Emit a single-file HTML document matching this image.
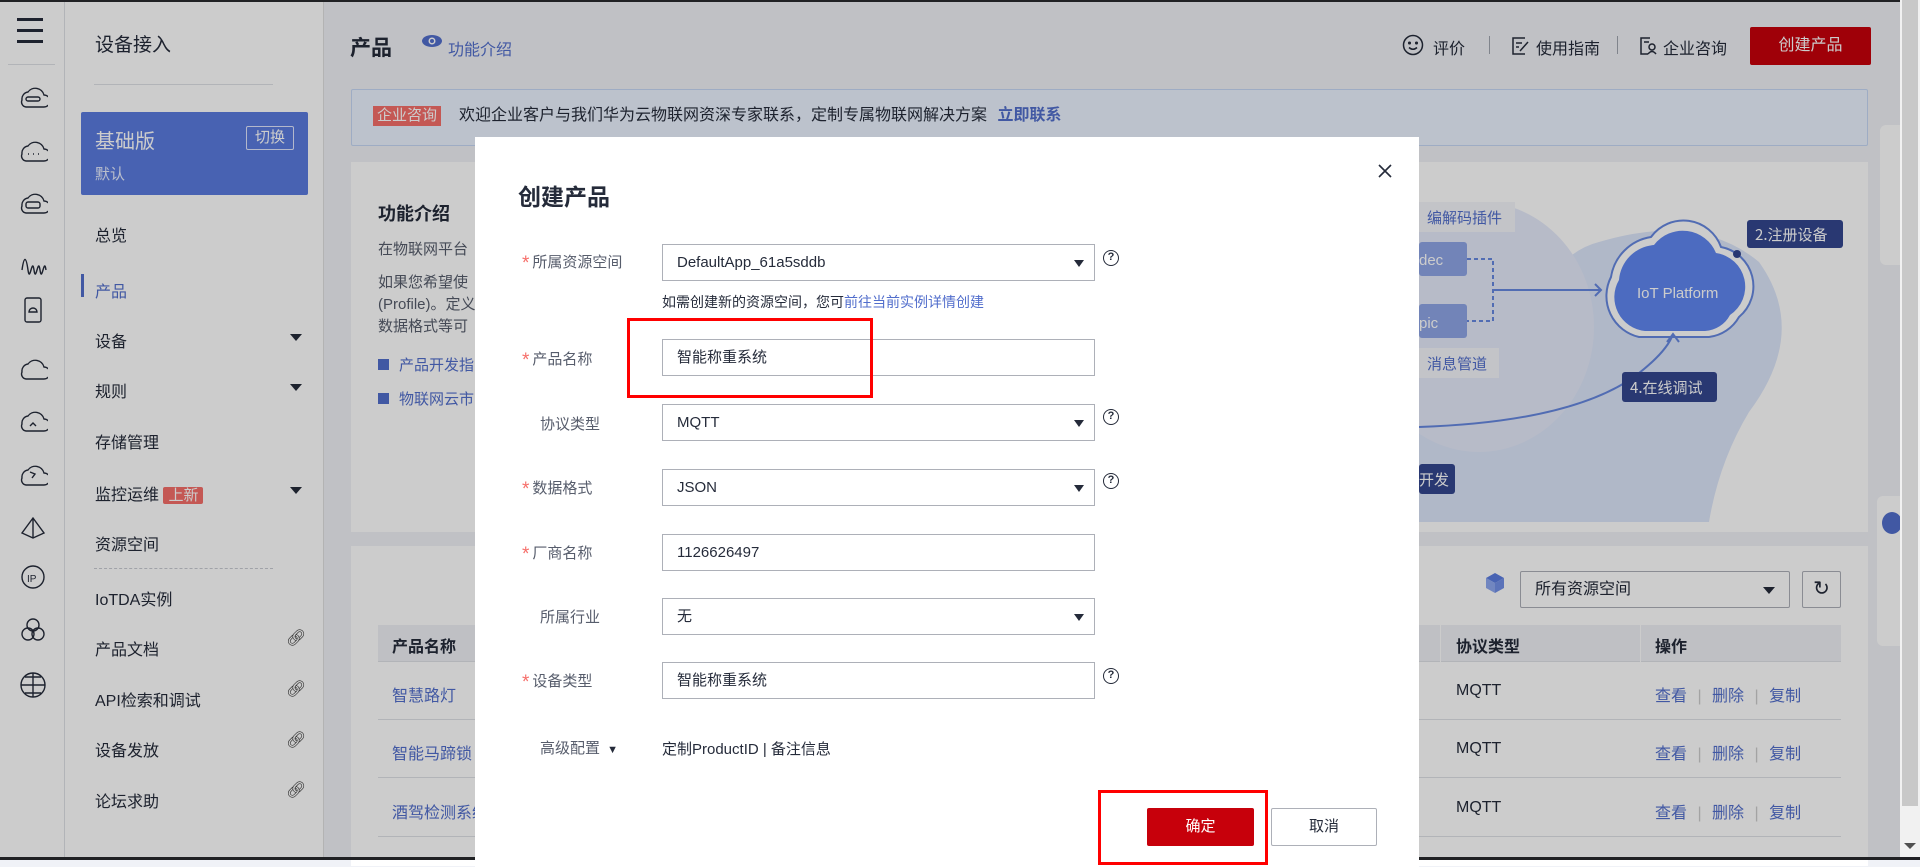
<!DOCTYPE html>
<html><head><meta charset="utf-8">
<style>
*{margin:0;padding:0;box-sizing:border-box}
body{width:1920px;height:860px;overflow:hidden;position:relative;background:#f0f2f7;font-family:"Liberation Sans","Noto Sans CJK SC",sans-serif;color:#252b3a}
.a{position:absolute}
.t{position:absolute;white-space:nowrap}
.rail{left:0;top:0;width:65px;height:860px;background:#fff;border-right:1px solid #dfe1e6}
.side{left:65px;top:0;width:259px;height:860px;background:#fff;border-right:1px solid #e0e0e0}
.mi{position:absolute;left:95px;font-size:16px;color:#252b3a}
.arrow{position:absolute;left:290px;width:0;height:0;border-left:6px solid transparent;border-right:6px solid transparent;border-top:7px solid #252b3a}
.link{position:absolute;left:286px;font-size:16px;color:#333}
.card{background:#fff}
.blue{color:#526ecc}
.ov{left:0;top:0;width:1900px;height:860px;background:rgba(0,0,0,0.2)}
.modal{left:475px;top:137px;width:944px;height:730px;background:#fff}
.lbl{position:absolute;font-size:15px;color:#575d6c}
.star{color:#f66f6a;font-size:19px;margin-right:3px;vertical-align:-2px}
.inp{position:absolute;left:662px;width:433px;height:37px;border:1px solid #adb0b8;font-size:15px;color:#252b3a;padding:0 14px;line-height:35px;background:#fff}
.inp .dd{position:absolute;right:10px;top:15px;border-left:5px solid transparent;border-right:5px solid transparent;border-top:7px solid #252b3a}
.q{position:absolute;left:1103px;width:16px;height:16px;border:1.5px solid #252b3a;border-radius:50%;font-size:11px;text-align:center;line-height:13px;font-weight:bold;color:#252b3a}
</style></head><body>
<div class="a rail">
 <div class="a" style="left:17px;top:18px;width:26px;height:3px;background:#252b3a"></div>
 <div class="a" style="left:17px;top:29px;width:26px;height:3px;background:#252b3a"></div>
 <div class="a" style="left:17px;top:40px;width:26px;height:3px;background:#252b3a"></div>
 <div class="a" style="left:8px;top:64px;width:47px;height:1px;background:#dfe1e6"></div>
 <svg class="a" style="left:18px;top:80px" width="30" height="620" viewBox="0 0 30 620" fill="none" stroke="#252b3a" stroke-width="1.4">
  <path d="M4 20a7 7 0 0 1 6-8a9 9 0 0 1 16 3a6 6 0 0 1 0 12H8a5 5 0 0 1-4-7z"/><rect x="8" y="17" width="14" height="4" rx="2"/>
  <path d="M4 74a7 7 0 0 1 6-8a9 9 0 0 1 16 3a6 6 0 0 1 0 12H8a5 5 0 0 1-4-7z"/><path d="M10 74h1M15 74h1M20 74h1"/>
  <path d="M4 126a7 7 0 0 1 6-8a9 9 0 0 1 16 3a6 6 0 0 1 0 12H8a5 5 0 0 1-4-7z"/><rect x="8" y="122" width="14" height="6" rx="2"/>
  <path d="M4 190c2-14 4-14 6 0s4-14 6 0 4-14 6 0 4-14 6 0"/>
  <rect x="7" y="218" width="16" height="24" rx="2"/><path d="M11 232a4 4 0 0 1 8 0z"/>
  <path d="M4 292a7 7 0 0 1 6-8a9 9 0 0 1 16 3a6 6 0 0 1 0 12H8a5 5 0 0 1-4-7z"/>
  <path d="M4 344a7 7 0 0 1 6-8a9 9 0 0 1 16 3a6 6 0 0 1 0 12H8a5 5 0 0 1-4-7z"/><path d="M12 346l3-3 3 3"/>
  <path d="M4 398a7 7 0 0 1 6-8a9 9 0 0 1 16 3a6 6 0 0 1 0 12H8a5 5 0 0 1-4-7z"/><path d="M12 392l5 2-3 4"/>
  <path d="M15 438l-11 15 11 5 11-5z M15 438v20"/>
  <circle cx="15" cy="497" r="11"/><text x="9" y="502" font-size="10" fill="#252b3a" stroke="none" font-family="Liberation Sans">IP</text>
  <circle cx="15" cy="545" r="6"/><circle cx="10" cy="554" r="6"/><circle cx="20" cy="554" r="6"/>
  <circle cx="15" cy="605" r="12"/><path d="M3 605h24M15 593v24M7 597h16M7 613h16"/>
 </svg>
</div>
<div class="a side"></div>
<div class="t" style="left:95px;top:30px;font-size:19px;color:#252b3a">设备接入</div>
<div class="a" style="left:94px;top:84px;width:179px;height:1px;background:#dfe1e6"></div>
<div class="a" style="left:81px;top:112px;width:227px;height:83px;background:#5a7bdf;border-radius:2px"></div>
<div class="t" style="left:95px;top:125px;font-size:20px;color:#fff">基础版</div>
<div class="t" style="left:95px;top:163px;font-size:15px;color:#e8eeff">默认</div>
<div class="t" style="left:246px;top:126px;width:48px;height:24px;border:1px solid #e0e7ff;color:#fff;font-size:15px;text-align:center;line-height:22px;border-radius:2px">切换</div>
<div class="mi" style="top:222px">总览</div>
<div class="a" style="left:81px;top:274px;width:3px;height:23px;background:#526ecc"></div>
<div class="mi" style="top:278px;color:#526ecc">产品</div>
<div class="mi" style="top:328px">设备</div><div class="arrow" style="top:334px"></div>
<div class="mi" style="top:378px">规则</div><div class="arrow" style="top:384px"></div>
<div class="mi" style="top:429px">存储管理</div>
<div class="mi" style="top:481px">监控运维 <span style="background:#f66f6a;color:#fff;font-size:15px;padding:0 5px;border-radius:2px">上新</span></div><div class="arrow" style="top:487px"></div>
<div class="mi" style="top:531px">资源空间</div>
<div class="a" style="left:94px;top:568px;width:179px;border-top:1px dashed #c8cbd2"></div>
<div class="mi" style="top:586px">IoTDA实例</div>
<div class="mi" style="top:636px">产品文档</div><div class="link" style="top:628px">🔗︎</div>
<div class="mi" style="top:687px">API检索和调试</div><div class="link" style="top:679px">🔗︎</div>
<div class="mi" style="top:737px">设备发放</div><div class="link" style="top:730px">🔗︎</div>
<div class="mi" style="top:788px">论坛求助</div><div class="link" style="top:780px">🔗︎</div>

<div class="t" style="left:350px;top:32px;font-size:21px;font-weight:bold">产品</div>
<svg class="a" style="left:421px;top:34px" width="22" height="14" viewBox="0 0 22 14"><ellipse cx="11" cy="7" rx="10" ry="6" fill="#526ecc"/><circle cx="11" cy="7" r="3.5" fill="#fff"/><circle cx="11" cy="7" r="2" fill="#526ecc"/></svg>
<div class="t blue" style="left:448px;top:36px;font-size:16px">功能介绍</div>
<svg class="a" style="left:1402px;top:34px" width="22" height="22" viewBox="0 0 22 22" fill="none" stroke="#252b3a" stroke-width="1.5"><circle cx="11" cy="11" r="9.5"/><circle cx="7.5" cy="9" r=".8" fill="#252b3a"/><circle cx="14.5" cy="9" r=".8" fill="#252b3a"/><path d="M7 13.5q4 3.5 8 0"/></svg>
<div class="t" style="left:1433px;top:35px;font-size:16px">评价</div>
<div class="a" style="left:1489px;top:36px;width:1px;height:18px;background:#a0a5b0"></div>
<svg class="a" style="left:1512px;top:37px" width="18" height="18" viewBox="0 0 18 18" fill="none" stroke="#252b3a" stroke-width="1.5"><path d="M13 1H1v16h12M4 6h6M4 10h3M8 14l8-9"/></svg>
<div class="t" style="left:1536px;top:35px;font-size:16px">使用指南</div>
<div class="a" style="left:1617px;top:36px;width:1px;height:18px;background:#a0a5b0"></div>
<svg class="a" style="left:1640px;top:37px" width="18" height="18" viewBox="0 0 18 18" fill="none" stroke="#252b3a" stroke-width="1.5"><path d="M10 1H1v16h7M4 5h5"/><circle cx="12" cy="10" r="3"/><path d="M8 17q4-5 8 0"/></svg>
<div class="t" style="left:1663px;top:35px;font-size:16px">企业咨询</div>
<div class="a" style="left:1750px;top:27px;width:121px;height:38px;background:#c7000b;border-radius:2px;color:#fff;font-size:16px;text-align:center;line-height:38px">创建产品</div>

<div class="a" style="left:351px;top:89px;width:1517px;height:57px;background:#ebf3ff;border:1px solid #c6d8f5;border-radius:2px"></div>
<div class="t" style="left:373px;top:106px;background:#f66f6a;color:#fff;font-size:15px;padding:0 4px;line-height:20px">企业咨询</div>
<div class="t" style="left:459px;top:106px;font-size:16px;line-height:20px">欢迎企业客户与我们华为云物联网资深专家联系，定制专属物联网解决方案 <b style="color:#526ecc;margin-left:6px">立即联系</b></div>

<div class="a card" style="left:351px;top:162px;width:1517px;height:370px"></div>
<div class="t" style="left:378px;top:200px;font-size:18px;font-weight:bold">功能介绍</div>
<div class="t" style="left:378px;top:238px;font-size:15px;color:#575d6c">在物联网平台</div>
<div class="t" style="left:378px;top:272px;font-size:15px;color:#575d6c;line-height:22px">如果您希望使<br>(Profile)。定义<br>数据格式等可</div>
<div class="a" style="left:378px;top:359px;width:11px;height:11px;background:#526ecc"></div>
<div class="t blue" style="left:399px;top:354px;font-size:15px">产品开发指</div>
<div class="a" style="left:378px;top:393px;width:11px;height:11px;background:#526ecc"></div>
<div class="t blue" style="left:399px;top:388px;font-size:15px">物联网云市</div>
<svg class="a" style="left:1419px;top:162px" width="449" height="370" viewBox="0 0 449 370">
 <path d="M180 80 Q280 50 340 100 Q390 170 330 250 Q300 300 290 360 L0 360 L0 230 Q90 200 120 140 Q140 90 180 80z" fill="#dde6fa"/>
 <ellipse cx="60" cy="165" rx="115" ry="125" fill="#e5eafa"/>
 <rect x="0" y="40" width="96" height="30" fill="#f4f6fb"/><text x="8" y="61" font-size="15" fill="#526ecc" font-family="Noto Sans CJK SC">编解码插件</text>
 <rect x="0" y="80" width="48" height="34" rx="3" fill="#8fa5e6"/><text x="0" y="103" font-size="15" fill="#fff">dec</text>
 <rect x="0" y="142" width="48" height="34" rx="3" fill="#8fa5e6"/><text x="0" y="166" font-size="15" fill="#fff">pic</text>
 <path d="M48 97h26v62h-26" fill="none" stroke="#6688e0" stroke-width="2" stroke-dasharray="4 3"/>
 <path d="M74 128h108M176 122l6 6-6 6" fill="none" stroke="#6688e0" stroke-width="2"/>
 <rect x="0" y="186" width="80" height="30" fill="#f4f6fb"/><text x="8" y="207" font-size="15" fill="#526ecc" font-family="Noto Sans CJK SC">消息管道</text>
 <path d="M192 115a48 48 0 0 1 40-40a40 40 0 0 1 70 10a40 40 0 0 1 18 70a40 40 0 0 1-30 20h-70a42 42 0 0 1-28-60z" fill="#fff" stroke="#6688e0" stroke-width="2"/>
 <path d="M200 118a38 38 0 0 1 35-35a36 36 0 0 1 62 8a34 34 0 0 1 14 62a30 30 0 0 1-25 16h-60a34 34 0 0 1-26-51z" fill="#5f86f0"/>
 <text x="218" y="136" font-size="15" fill="#fff">IoT Platform</text>
 <rect x="328" y="58" width="96" height="28" rx="3" fill="#34478f"/><text x="336" y="78" font-size="15" fill="#fff" font-family="Noto Sans CJK SC">2.注册设备</text>
 <circle cx="318" cy="92" r="4" fill="#34478f"/>
 <path d="M0 265Q150 260 215 215Q248 190 254 172M248 180l6-8 6 8" fill="none" stroke="#6688e0" stroke-width="2"/>
 <rect x="203" y="210" width="95" height="30" rx="3" fill="#34478f"/><text x="211" y="231" font-size="15" fill="#fff" font-family="Noto Sans CJK SC">4.在线调试</text>
 <rect x="0" y="302" width="36" height="30" rx="3" fill="#34478f"/><text x="0" y="323" font-size="15" fill="#fff" font-family="Noto Sans CJK SC">开发</text>
</svg>

<div class="a card" style="left:351px;top:546px;width:1517px;height:320px"></div>
<svg class="a" style="left:1484px;top:572px" width="22" height="22" viewBox="0 0 22 22"><path d="M11 1l9 5-9 5-9-5z" fill="#5b7ce0"/><path d="M2 6l9 5v10l-9-5z" fill="#8ea8f0"/><path d="M20 6l-9 5v10l9-5z" fill="#7290e8"/></svg>
<div class="a" style="left:1520px;top:571px;width:270px;height:37px;border:1px solid #adb0b8;border-radius:2px;font-size:16px;padding-left:14px;line-height:35px">所有资源空间<span style="position:absolute;right:14px;top:15px;border-left:6px solid transparent;border-right:6px solid transparent;border-top:7px solid #252b3a"></span></div>
<div class="a" style="left:1802px;top:571px;width:39px;height:37px;border:1px solid #adb0b8;border-radius:2px;text-align:center;line-height:35px;font-size:20px">↻</div>
<div class="a" style="left:378px;top:625px;width:1463px;height:37px;background:#eff1f5;border-bottom:1px solid #dfe1e6"></div>
<div class="a" style="left:1440px;top:625px;width:1px;height:37px;background:#fff"></div>
<div class="a" style="left:1640px;top:625px;width:1px;height:37px;background:#fff"></div>
<div class="t" style="left:392px;top:633px;font-size:16px;font-weight:bold">产品名称</div>
<div class="t" style="left:1456px;top:633px;font-size:16px;font-weight:bold">协议类型</div>
<div class="t" style="left:1655px;top:633px;font-size:16px;font-weight:bold">操作</div>
<div class="a" style="left:378px;top:719px;width:1463px;height:1px;background:#dfe1e6"></div>
<div class="a" style="left:378px;top:777px;width:1463px;height:1px;background:#dfe1e6"></div>
<div class="a" style="left:378px;top:836px;width:1463px;height:1px;background:#dfe1e6"></div>
<div class="t blue" style="left:392px;top:682px;font-size:16px">智慧路灯</div>
<div class="t blue" style="left:392px;top:740px;font-size:16px">智能马蹄锁</div>
<div class="t blue" style="left:392px;top:799px;font-size:16px">酒驾检测系统</div>
<div class="t" style="left:1456px;top:682px;font-size:16px">MQTT</div>
<div class="t" style="left:1456px;top:740px;font-size:16px">MQTT</div>
<div class="t" style="left:1456px;top:799px;font-size:16px">MQTT</div>
<div class="t blue" style="left:1655px;top:682px;font-size:16px;word-spacing:6px">查看 <span style="color:#ccc">|</span> 删除 <span style="color:#ccc">|</span> 复制</div>
<div class="t blue" style="left:1655px;top:740px;font-size:16px;word-spacing:6px">查看 <span style="color:#ccc">|</span> 删除 <span style="color:#ccc">|</span> 复制</div>
<div class="t blue" style="left:1655px;top:799px;font-size:16px;word-spacing:6px">查看 <span style="color:#ccc">|</span> 删除 <span style="color:#ccc">|</span> 复制</div>

<div class="a" style="left:1880px;top:125px;width:25px;height:140px;background:#fff;border-radius:6px 0 0 6px"></div>
<div class="a" style="left:1877px;top:496px;width:25px;height:150px;background:#fff;border-radius:6px 0 0 6px"></div>
<div class="a" style="left:1882px;top:512px;width:20px;height:22px;background:#526ecc;border-radius:50%"></div>

<div class="a ov"></div>
<div class="a" style="left:1900px;top:0;width:20px;height:860px;background:#f1f1f1"></div>
<div class="a" style="left:1902px;top:0;width:16px;height:806px;background:#c8c8c8"></div>
<div class="a" style="left:1904px;top:843px;border-left:6px solid transparent;border-right:6px solid transparent;border-top:6px solid #505050"></div>
<div class="a" style="left:0;top:0;width:1900px;height:2px;background:#202124"></div>
<div class="a" style="left:0;top:857px;width:1920px;height:3px;background:#202124"></div>

<div class="a modal"></div>
<div class="t" style="left:518px;top:178px;font-size:23px;font-weight:bold">创建产品</div>
<svg class="a" style="left:1377px;top:163px" width="16" height="16" viewBox="0 0 16 16" stroke="#252b3a" stroke-width="1.6"><path d="M2 2l12 12M14 2L2 14"/></svg>

<div class="lbl" style="left:522px;top:251px"><span class="star">*</span>所属资源空间</div>
<div class="inp" style="top:244px">DefaultApp_61a5sddb<span class="dd"></span></div>
<div class="q" style="top:250px">?</div>
<div class="t" style="left:662px;top:292px;font-size:14px;color:#252b3a">如需创建新的资源空间，您可<span style="color:#526ecc">前往当前实例详情创建</span></div>

<div class="lbl" style="left:522px;top:348px"><span class="star">*</span>产品名称</div>
<div class="inp" style="top:339px">智能称重系统</div>

<div class="lbl" style="left:540px;top:413px">协议类型</div>
<div class="inp" style="top:404px">MQTT<span class="dd"></span></div>
<div class="q" style="top:409px">?</div>

<div class="lbl" style="left:522px;top:477px"><span class="star">*</span>数据格式</div>
<div class="inp" style="top:469px">JSON<span class="dd"></span></div>
<div class="q" style="top:473px">?</div>

<div class="lbl" style="left:522px;top:542px"><span class="star">*</span>厂商名称</div>
<div class="inp" style="top:534px">1126626497</div>

<div class="lbl" style="left:540px;top:606px">所属行业</div>
<div class="inp" style="top:598px">无<span class="dd"></span></div>

<div class="lbl" style="left:522px;top:670px"><span class="star">*</span>设备类型</div>
<div class="inp" style="top:662px">智能称重系统</div>
<div class="q" style="top:668px">?</div>

<div class="lbl" style="left:540px;top:737px">高级配置 <span style="font-size:11px;color:#252b3a;margin-left:3px">▼</span></div>
<div class="t" style="left:662px;top:738px;font-size:15px;color:#252b3a">定制ProductID | 备注信息</div>

<div class="a" style="left:1147px;top:808px;width:107px;height:38px;background:#c7000b;border-radius:2px;color:#fff;font-size:15px;text-align:center;line-height:38px">确定</div>
<div class="a" style="left:1271px;top:808px;width:106px;height:38px;border:1px solid #adb0b8;border-radius:2px;color:#252b3a;font-size:15px;text-align:center;line-height:36px;background:#fff">取消</div>

<div class="a" style="left:627px;top:318px;width:246px;height:80px;border:3px solid #f00"></div>
<div class="a" style="left:1098px;top:790px;width:170px;height:75px;border:3px solid #f00"></div>
</body></html>
